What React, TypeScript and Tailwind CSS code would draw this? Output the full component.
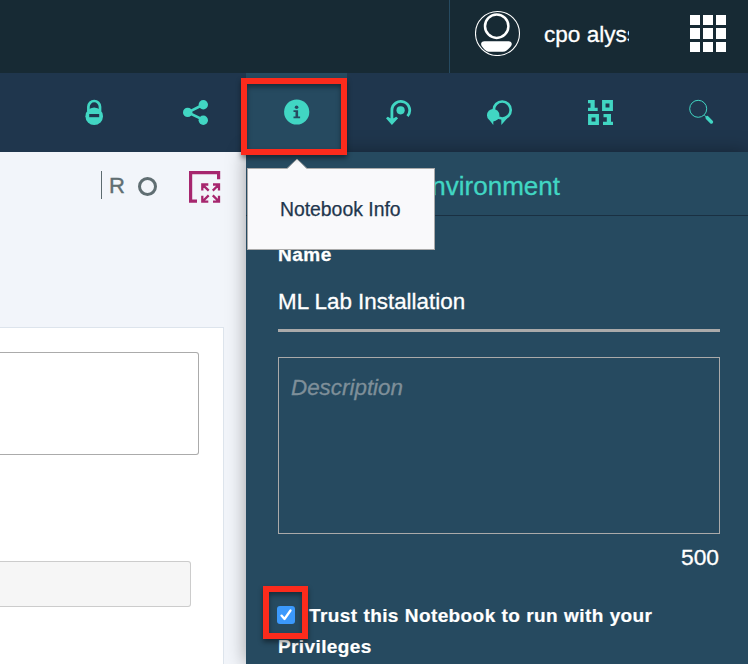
import React from "react";

const LockIcon = () => (
  <svg width="20" height="26" viewBox="0 0 20 26" fill="none">
    <path d="M3.400 12V7.800a5.800 5.800 0 0 1 11.600 0V12" stroke="#41d6c3" strokeWidth="2.700" />
    <circle cx="9.200" cy="17.200" r="8.800" fill="#41d6c3" />
    <path d="M4.200 15h10v3.200h-10z" fill="#1f364d" />
  </svg>
);

const ShareIcon = () => (
  <svg width="26" height="26" viewBox="0 0 26 26">
    <path d="M20.500 5.500L5 13.400l15.500 7.500" fill="none" stroke="#41d6c3" strokeWidth="2.700" />
    <circle cx="20.300" cy="5.700" r="4.700" fill="#41d6c3" />
    <circle cx="4.700" cy="13.400" r="4.700" fill="#41d6c3" />
    <circle cx="20.300" cy="21.200" r="4.700" fill="#41d6c3" />
  </svg>
);

const InfoIcon = () => (
  <svg width="26" height="26" viewBox="0 0 26 26">
    <circle cx="12.700" cy="13" r="12.600" fill="#41d6c3" />
    <circle cx="12.600" cy="8.200" r="1.800" fill="#264a60" />
    <path d="M9.500 11.200h4.600v6.200h2V19.200H9.500v-1.800h2v-4.500h-2z" fill="#264a60" />
  </svg>
);

const HistoryIcon = () => (
  <svg width="26" height="26" viewBox="0 0 26 26" fill="none">
    <path d="M5.900 21V11.200a8.900 8.900 0 1 1 15.600 6" stroke="#41d6c3" strokeWidth="2.800" />
    <circle cx="14.600" cy="11.300" r="4.100" fill="#41d6c3" />
    <path d="M0 19.300l1.800-1.600 2.600 1.500h3.200l2.600-1.500 1.900 1.600L5.900 26z" fill="#41d6c3" />
  </svg>
);

const ChatIcon = () => (
  <svg width="26" height="26" viewBox="0 0 26 26" fill="none">
    <circle cx="15.200" cy="11" r="8.500" stroke="#41d6c3" strokeWidth="2.700" />
    <path d="M14.300 19.300V26l7-8z" fill="#41d6c3" />
    <circle cx="6.200" cy="16.200" r="6.200" fill="#41d6c3" />
    <path d="M1.800 20.300L6.300 26v-4z" fill="#41d6c3" />
  </svg>
);

const BinaryIcon = () => (
  <svg width="26" height="26" viewBox="0 0 26 26" fill="#41d6c3">
    <path d="M0 1h6.700v7.700H9.700V12H0V8.700h2.500V4.200H0z" />
    <path d="M15.500 15H23v7.700h2V26H15v-3.300h3.800v-4.500h-3.300z" />
    <path d="M15.800 2.800h7.400v7.400h-7.400zM1.800 16.800h7.400v7.400H1.800z" fill="none" stroke="#41d6c3" strokeWidth="3.500" />
  </svg>
);

const SearchIcon = () => (
  <svg width="26" height="26" viewBox="0 0 26 26" fill="none">
    <circle cx="9.200" cy="9.800" r="8.500" stroke="#41d6c3" />
    <path d="M15.300 16.200l2.500 2.200" stroke="#41d6c3" />
    <path d="M18.200 18.700l4.200 4.300" stroke="#41d6c3" strokeWidth="3.500" strokeLinecap="round" />
  </svg>
);

const AvatarIcon = () => (
  <svg width="46" height="46" viewBox="0 0 46 46" fill="none" stroke="#fff">
    <circle cx="22.500" cy="23.500" r="22" strokeWidth="1.100" />
    <circle cx="21.700" cy="16.200" r="11.700" strokeWidth="2.500" />
    <path
      d="M9.500 31.200h24c3.400 0 4.200 3 2.200 5.200-2.400 2.900-4.700 5.400-8 5.400H15c-3.500 0-5.800-2.500-8-5.400-1.800-2.400-.9-5.200 2.500-5.200z"
      fill="#fff"
      stroke="none"
    />
  </svg>
);

const ExpandIcon = () => (
  <svg width="32" height="33" viewBox="0 0 32 33" fill="none" stroke="#a6266e">
    <path d="M8 30.200H1.600V1.600h28V8.200" strokeWidth="3.200" />
    <path
      d="M13.300 19.500v-6h6M13.700 13.800l6 5.800M24 13.500h6v6M29.700 13.800l-5.900 5.800M13.300 24.700v6h6M13.700 30.300l6-5.900M24 30.700h6v-6M29.700 30.300l-5.900-5.900"
      strokeWidth="2.300"
    />
  </svg>
);

const tools = [LockIcon, ShareIcon, InfoIcon, HistoryIcon, ChatIcon, BinaryIcon, SearchIcon];

function Header() {
  return (
    <header className="flex h-[73px] shrink-0 bg-[#172a34] pl-[449px]">
      <div className="flex w-[299px] border-l border-[#264a60] pt-[10px] pl-[25px]">
        <AvatarIcon />
        <div className="ml-[23px] h-[50px] w-[85px] overflow-hidden text-[22.600px] leading-[50px] whitespace-nowrap text-white [-webkit-text-stroke:0.3px]">
          cpo alyss
        </div>
        <div className="mt-[5px] ml-[61px] grid h-[37px] w-[36px] grid-cols-3 gap-[3px]">
          {Array.from({ length: 9 }, (_, i) => (
            <span key={i} className="bg-white" />
          ))}
        </div>
      </div>
    </header>
  );
}

function Toolbar() {
  return (
    <nav className="flex h-[79px] shrink-0 bg-[#1f364d] pl-[43.5px]">
      {tools.map((Icon, i) => (
        <div
          key={i}
          className={
            i === 2
              ? "relative flex w-[101.200px] shrink-0 justify-center bg-[#264a60] pt-[26px] pl-[2px]"
              : "flex w-[101.200px] shrink-0 justify-center pt-[26px] pl-[2px]"
          }
        >
          <Icon />
          {i === 2 && (
            <>
              <div className="absolute top-[5px] left-[-5px] z-20 h-[77px] w-[106px] border-6 border-[#fc2b1c] shadow-[0_3px_5px_rgba(0,0,0,0.45),inset_0_3px_5px_rgba(0,0,0,0.4)]" />
              <div className="absolute top-[95px] left-px z-10 h-[82px] w-[188px] border border-[#aaa] bg-[#f9f9fb] pl-[32px] text-[19.400px] leading-[80px] whitespace-nowrap text-[#1f364d] [-webkit-text-stroke:0.25px]">
                Notebook Info
                <svg className="absolute top-[-11px] left-[38px]" width="22" height="12" viewBox="0 0 22 12">
                  <path d="M1 11L11 1l10 10v1H1z" fill="#f9f9fb" />
                  <path d="M1 10.500L11 1l10 9.500" fill="none" stroke="#aaa" />
                </svg>
              </div>
            </>
          )}
        </div>
      ))}
    </nav>
  );
}

function NotebookArea() {
  return (
    <main className="flex w-[246px] shrink-0 flex-col bg-[#f2f5fa]">
      <div className="flex h-[175px] shrink-0 items-start pt-[19px] pl-[101px]">
        <div className="h-[28px] w-px bg-[#5d6b70]" />
        <span className="ml-[7px] w-[17px] text-[22px] leading-[30px] text-[#606e72] [-webkit-text-stroke:0.4px]">R</span>
        <div className="mt-[6px] ml-[12px] size-[19px] rounded-full border-3 border-[#606e72]" />
        <div className="ml-[32px]">
          <ExpandIcon />
        </div>
      </div>
      <div className="w-[224px] grow border-t border-r border-[#dde4ec] bg-white pt-[24px]">
        <div className="h-[103px] w-[199px] rounded-r-[3px] border border-l-0 border-[#ababab]" />
        <div className="mt-[106px] h-[46px] w-[191px] rounded-r-[3px] border border-l-0 border-[#ccc] bg-[#f6f6f6]" />
      </div>
    </main>
  );
}

function InfoPanel() {
  return (
    <aside className="flex grow flex-col bg-[#264a60] text-white shadow-[0_0_18px_rgba(0,0,0,0.35)]">
      <div className="h-[64px] shrink-0 border-b border-[#1a3042] pl-[168px] text-[26px] leading-[68px] text-[#41d6c3] [-webkit-text-stroke:0.3px]">
        Environment
      </div>
      <div className="flex flex-col pr-[28px] pl-[32px]">
        <div className="mt-[26px] h-[26px] text-[19px] leading-[26px] font-bold tracking-[0.500px] [-webkit-text-stroke:0.3px]">
          Name
        </div>
        <div className="mt-[18px] h-[46px] border-b-3 border-[#aaa] text-[22.400px] leading-[31px] [-webkit-text-stroke:0.3px]">
          ML Lab Installation
        </div>
        <div className="mt-[25px] h-[177px] border border-[#aaa] pt-[14px] pl-[12px] text-[22.400px] leading-[31px] text-[#7e8f99] italic [-webkit-text-stroke:0.3px]">
          Description
        </div>
        <div className="mt-[8px] pr-px text-right text-[22.800px] leading-[31px] [-webkit-text-stroke:0.3px]">500</div>
        <div className="mt-[27px] text-[19px] leading-[31px] font-bold tracking-[0.400px] [word-spacing:0.3px] whitespace-nowrap [-webkit-text-stroke:0.2px]">
          <div className="flex">
            <div className="relative mt-[6px] mr-[14px] -ml-px flex size-[18px] items-center justify-center rounded-[3px] bg-[#3b99fc]">
              <svg width="14" height="14" viewBox="0 0 14 14" fill="none">
                <path d="M2.500 7.600l3 3.400L11.500 2.500" stroke="#fff" strokeWidth="2.300" strokeLinecap="round" strokeLinejoin="round" />
              </svg>
              <div className="absolute top-[-20px] left-[-14px] z-10 h-[53px] w-[45px] border-6 border-[#fc2b1c] shadow-[0_3px_5px_rgba(0,0,0,0.45),inset_0_3px_5px_rgba(0,0,0,0.4)]" />
            </div>
            <span>Trust this Notebook to run with your</span>
          </div>
          <div>Privileges</div>
        </div>
      </div>
    </aside>
  );
}

export default function App() {
  return (
    <div className="flex h-[664px] w-[748px] flex-col overflow-hidden font-['Liberation_Sans',Arial,sans-serif]">
      <Header />
      <Toolbar />
      <div className="flex min-h-0 grow">
        <NotebookArea />
        <InfoPanel />
      </div>
    </div>
  );
}
